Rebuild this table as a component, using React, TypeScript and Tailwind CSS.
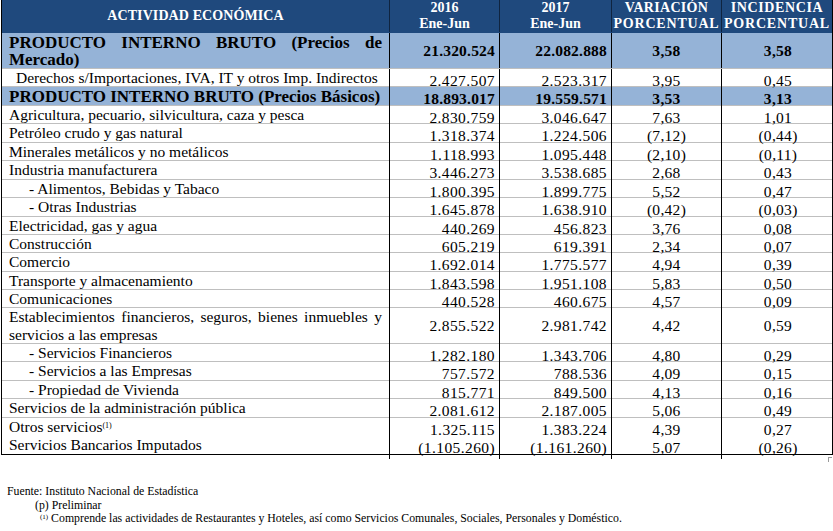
import React from "react";

interface Fila {
  nombre: string;
  v16: string;
  v17: string;
  variacion: string;
  incidencia: string;
  tipo?: "total" | "sub" | "impuesto";
  alto: string;
  sinLinea?: boolean;
  nota?: boolean;
}

const filas: Fila[] = [
  { nombre: "PRODUCTO INTERNO BRUTO (Precios de Mercado)", v16: "21.320.524", v17: "22.082.888", variacion: "3,58", incidencia: "3,58", tipo: "total", alto: "h-[36px]" },
  { nombre: "Derechos s/Importaciones, IVA, IT y otros Imp. Indirectos", v16: "2.427.507", v17: "2.523.317", variacion: "3,95", incidencia: "0,45", tipo: "impuesto", alto: "h-[18px]" },
  { nombre: "PRODUCTO INTERNO BRUTO (Precios Básicos)", v16: "18.893.017", v17: "19.559.571", variacion: "3,53", incidencia: "3,13", tipo: "total", alto: "h-[19px]" },
  { nombre: "Agricultura, pecuario, silvicultura, caza y pesca", v16: "2.830.759", v17: "3.046.647", variacion: "7,63", incidencia: "1,01", alto: "h-[18px]" },
  { nombre: "Petróleo crudo y gas natural", v16: "1.318.374", v17: "1.224.506", variacion: "(7,12)", incidencia: "(0,44)", alto: "h-[19px]" },
  { nombre: "Minerales metálicos y no metálicos", v16: "1.118.993", v17: "1.095.448", variacion: "(2,10)", incidencia: "(0,11)", alto: "h-[18px]" },
  { nombre: "Industria manufacturera", v16: "3.446.273", v17: "3.538.685", variacion: "2,68", incidencia: "0,43", alto: "h-[19px]" },
  { nombre: "- Alimentos, Bebidas y Tabaco", v16: "1.800.395", v17: "1.899.775", variacion: "5,52", incidencia: "0,47", tipo: "sub", alto: "h-[18px]" },
  { nombre: "- Otras Industrias", v16: "1.645.878", v17: "1.638.910", variacion: "(0,42)", incidencia: "(0,03)", tipo: "sub", alto: "h-[19px]" },
  { nombre: "Electricidad, gas y agua", v16: "440.269", v17: "456.823", variacion: "3,76", incidencia: "0,08", alto: "h-[18px]" },
  { nombre: "Construcción", v16: "605.219", v17: "619.391", variacion: "2,34", incidencia: "0,07", alto: "h-[18px]" },
  { nombre: "Comercio", v16: "1.692.014", v17: "1.775.577", variacion: "4,94", incidencia: "0,39", alto: "h-[19px]" },
  { nombre: "Transporte y almacenamiento", v16: "1.843.598", v17: "1.951.108", variacion: "5,83", incidencia: "0,50", alto: "h-[18px]" },
  { nombre: "Comunicaciones", v16: "440.528", v17: "460.675", variacion: "4,57", incidencia: "0,09", alto: "h-[18px]" },
  { nombre: "Establecimientos financieros, seguros, bienes inmuebles y servicios a las empresas", v16: "2.855.522", v17: "2.981.742", variacion: "4,42", incidencia: "0,59", alto: "h-[36px]" },
  { nombre: "- Servicios Financieros", v16: "1.282.180", v17: "1.343.706", variacion: "4,80", incidencia: "0,29", tipo: "sub", alto: "h-[18px]" },
  { nombre: "- Servicios a las Empresas", v16: "757.572", v17: "788.536", variacion: "4,09", incidencia: "0,15", tipo: "sub", alto: "h-[19px]" },
  { nombre: "- Propiedad de Vivienda", v16: "815.771", v17: "849.500", variacion: "4,13", incidencia: "0,16", tipo: "sub", alto: "h-[18px]" },
  { nombre: "Servicios de la administración pública", v16: "2.081.612", v17: "2.187.005", variacion: "5,06", incidencia: "0,49", alto: "h-[19px]" },
  { nombre: "Otros servicios", v16: "1.325.115", v17: "1.383.224", variacion: "4,39", incidencia: "0,27", alto: "h-[18px]", sinLinea: true, nota: true },
  { nombre: "Servicios Bancarios Imputados", v16: "(1.105.260)", v17: "(1.161.260)", variacion: "5,07", incidencia: "(0,26)", alto: "h-[18px]", sinLinea: true },
];

const columnas = "grid grid-cols-[388px_110px_112px_110px_110px]";

function FilaTabla({ fila }: { fila: Fila }) {
  const total = fila.tipo === "total";
  const fondo = total ? "bg-[#95b3d7]" : "bg-white";
  const linea = fila.sinLinea ? "" : "border-b border-[#bfbfbf]";
  const sangria =
    fila.tipo === "sub" ? "pl-[27px]" : fila.tipo === "impuesto" ? "pl-[14px]" : "pl-[7px]";
  const dosLineas = fila.alto === "h-[36px]";

  return (
    <div className={`${columnas} ${fila.alto} ${fondo} ${linea}`}>
      <div
        className={`
          border-r border-black
          ${sangria} pr-[7px]
          ${dosLineas ? "text-justify" : "whitespace-nowrap"}
          ${total ? "text-[17px] font-bold leading-[17px] pt-[1px]" : "text-[15.5px] leading-[18px]"}
        `}
      >
        {fila.nombre}
        {fila.nota && <sup className="text-[8px]">(1)</sup>}
      </div>
      <div
        className={`
          border-r border-black flex items-center justify-end pr-[4px]
          ${total ? "font-bold tracking-[0.2px]" : "tracking-[0.4px]"}
        `}
      >
        {fila.v16}
      </div>
      <div
        className={`
          border-r border-black flex items-center justify-end pr-[4px]
          ${total ? "font-bold tracking-[0.2px]" : "tracking-[0.4px]"}
        `}
      >
        {fila.v17}
      </div>
      <div
        className={`
          border-r border-black flex items-center justify-center tracking-[0.3px]
          ${total ? "font-bold" : ""}
        `}
      >
        {fila.variacion}
      </div>
      <div
        className={`
          flex items-center justify-center pl-[2px] tracking-[0.3px]
          ${total ? "font-bold" : ""}
        `}
      >
        {fila.incidencia}
      </div>
    </div>
  );
}

export default function App() {
  return (
    <div
      className="
        w-[833px] h-[531px]
        bg-white text-black
        font-['Liberation_Serif',serif]
        text-[15.5px]
      "
    >
      <div className="ml-[1px] w-[832px] border border-black border-t-0">

        <div
          className={`
            ${columnas}
            h-[33px]
            bg-[#1f497d]
            text-white text-[14px] font-bold
            leading-[16px]
            border-b border-[#1f497d]
          `}
        >
          <div className="border-r border-[#0f2440] flex items-center justify-center tracking-[0.1px]">
            ACTIVIDAD ECONÓMICA
          </div>
          <div className="border-r border-[#0f2440] flex flex-col items-center justify-center">
            <span>2016</span>
            <span>Ene-Jun</span>
          </div>
          <div className="border-r border-[#0f2440] flex flex-col items-center justify-center">
            <span>2017</span>
            <span>Ene-Jun</span>
          </div>
          <div className="border-r border-[#0f2440] flex flex-col items-center justify-center">
            <span className="tracking-[0.3px]">VARIACIÓN</span>
            <span className="tracking-[0.8px]">PORCENTUAL</span>
          </div>
          <div className="flex flex-col items-center justify-center">
            <span className="tracking-[0.6px]">INCIDENCIA</span>
            <span className="tracking-[0.8px]">PORCENTUAL</span>
          </div>
        </div>

        {filas.map((fila) => (
          <FilaTabla key={fila.nombre} fila={fila} />
        ))}

      </div>

      <div className="flex justify-end pr-[1px] pt-[2px]">
        <div className="w-[4px] h-[5px] border-l border-t border-[#9a9a9a]" />
      </div>

      <div className="mt-[23px] pl-[7px] text-[11.8px] leading-[13.5px]">
        <p>Fuente: Instituto Nacional de Estadística</p>
        <p className="pl-[28px]">(p) Preliminar</p>
        <p className="pl-[33px]">
          <sup className="text-[7px]">(1)</sup> Comprende las actividades de Restaurantes y Hoteles, así como Servicios Comunales, Sociales, Personales y Doméstico.
        </p>
      </div>
    </div>
  );
}
